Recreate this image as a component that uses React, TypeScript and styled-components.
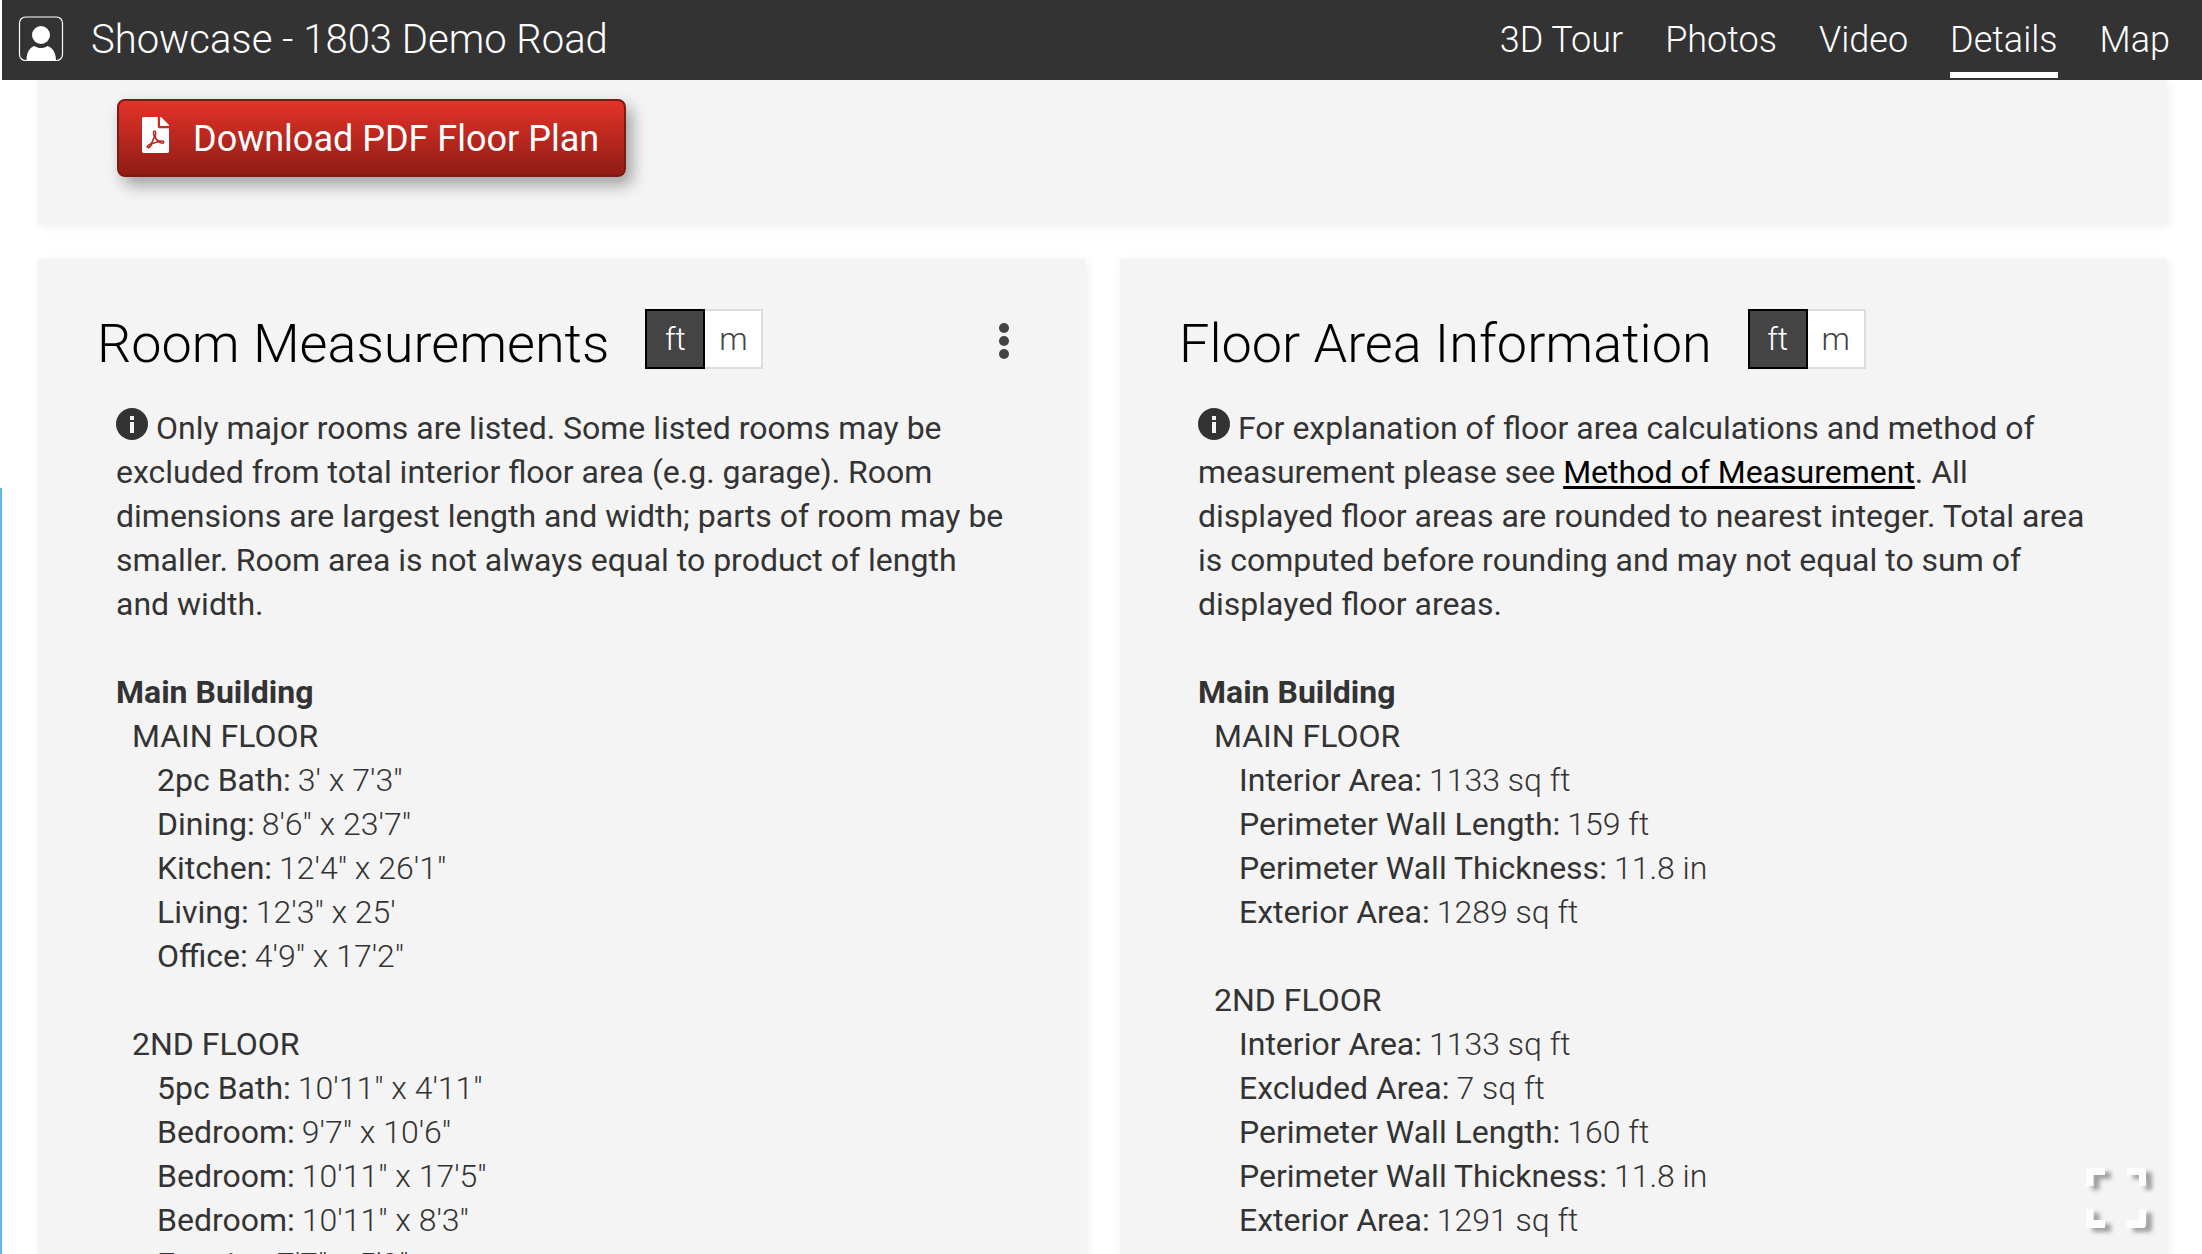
import React, { useState } from "react";
import styled, { createGlobalStyle, css } from "styled-components";

const GlobalStyle = createGlobalStyle`
  *, *::before, *::after { box-sizing: border-box; }
  body { margin: 0; background: #fff; }
  button { font-family: inherit; cursor: pointer; }
`;

const Page = styled.div`
  height: 100vh;
  overflow: hidden;
  display: flex;
  flex-direction: column;
  background: #fff;
  color: #333;
  font-family: Roboto, "Liberation Sans", sans-serif;
  font-size: 32px;
  line-height: 44px;
`;

const EdgeMarker = styled.div`
  position: fixed;
  left: 0;
  top: 488px;
  bottom: 0;
  width: 2px;
  background: #5cb8ee;
`;

const Header = styled.header`
  flex: none;
  display: flex;
  align-items: flex-start;
  height: 80px;
  margin-left: 2px;
  padding: 0 32px 0 16px;
  background: #333;
  color: #fff;
  font-weight: 300;
`;

const ProfileButton = styled.button`
  display: flex;
  align-items: center;
  height: 78px;
  padding: 0;
  border: 0;
  background: none;
`;

const Title = styled.h1`
  margin: 0 auto 0 27px;
  font-size: 40px;
  line-height: 80px;
  font-weight: 300;
`;

const Nav = styled.nav`
  display: flex;
  gap: 42px;
`;

const NavLink = styled.a<{ $active?: boolean }>`
  height: 78px;
  border-bottom: 6px solid ${(p) => (p.$active ? "#fff" : "transparent")};
  color: #fff;
  font-size: 36px;
  line-height: 80px;
  text-decoration: none;
`;

const Content = styled.main`
  flex: 1;
  min-height: 0;
  overflow: hidden;
  display: flex;
  flex-direction: column;
  gap: 36px;
  padding: 0 35px 0 38px;
`;

const cardSurface = css`
  background: #f4f4f4;
  box-shadow: 2px 3px 10px rgba(0, 0, 0, 0.08);
`;

const DownloadCard = styled.section`
  ${cardSurface}
  flex: none;
  padding: 19px 79px 46px;
`;

const DownloadButton = styled.button`
  display: flex;
  align-items: flex-start;
  gap: 24px;
  height: 78px;
  padding: 16px 25px 0 23px;
  border: 2px solid #7f1a12;
  border-radius: 8px;
  background: linear-gradient(#e43329, #8f1c14);
  box-shadow: 6px 8px 16px rgba(0, 0, 0, 0.35);
  color: #fff;
  font-size: 36px;
  line-height: 44px;
  font-weight: 400;
`;

const Columns = styled.div`
  flex: none;
  display: grid;
  grid-template-columns: 1fr 1fr;
  gap: 35px;
`;

const Card = styled.section`
  ${cardSurface}
  padding: 50px 76px 60px 59px;
`;

const CardHeader = styled.div`
  display: flex;
  align-items: flex-start;
  margin-bottom: 27px;
`;

const CardTitle = styled.h2`
  margin: 0 36px 0 0;
  color: #000;
  font-size: 54px;
  line-height: 70px;
  font-weight: 300;
`;

const UnitToggle = styled.div`
  display: flex;
  height: 60px;
`;

const UnitButton = styled.button<{ $active: boolean }>`
  width: 60px;
  padding: 0;
  border: 2px solid ${(p) => (p.$active ? "#000" : "#ddd")};
  background: ${(p) => (p.$active ? "#444" : "#fff")};
  color: ${(p) => (p.$active ? "#fff" : "#444")};
  font-size: 32px;
  font-weight: 300;
  position: relative;
  z-index: ${(p) => (p.$active ? 1 : 0)};
  & + & { margin-left: -2px; }
`;

const MenuButton = styled.button`
  display: flex;
  align-items: center;
  height: 64px;
  margin-left: auto;
  padding: 0;
  border: 0;
  background: none;
`;

const CardBody = styled.div`
  padding: 0 3px 0 19px;
`;

const Note = styled.p`
  margin: 0 0 44px;
`;

const InfoIcon = styled.svg`
  margin-right: 8px;
  vertical-align: -1px;
`;

const MethodLink = styled.a`
  color: #000;
  text-underline-offset: 3px;
`;

const Building = styled.h3`
  margin: 0;
  font-size: 32px;
  font-weight: 700;
`;

const Floor = styled.section`
  margin-bottom: 44px;
  padding-left: 16px;
`;

const FloorName = styled.h4`
  margin: 0;
  font-size: 32px;
  font-weight: 400;
`;

const Facts = styled.dl`
  margin: 0;
  padding-left: 25px;
`;

const Fact = styled.div`
  display: flex;
  gap: 7px;
`;

const FactName = styled.dt`
  font-weight: 400;
`;

const FactValue = styled.dd`
  margin: 0;
  font-weight: 300;
`;

const FullscreenButton = styled.button`
  position: fixed;
  right: 56px;
  bottom: 26px;
  display: flex;
  padding: 0;
  border: 0;
  background: none;
  filter: drop-shadow(6px 4px 2px rgba(0, 0, 0, 0.35));
`;

type Level = { name: string; facts: [string, string][] };

const roomLevels: Level[] = [
  {
    name: "MAIN FLOOR",
    facts: [
      ["2pc Bath:", "3' x 7'3\""],
      ["Dining:", "8'6\" x 23'7\""],
      ["Kitchen:", "12'4\" x 26'1\""],
      ["Living:", "12'3\" x 25'"],
      ["Office:", "4'9\" x 17'2\""],
    ],
  },
  {
    name: "2ND FLOOR",
    facts: [
      ["5pc Bath:", "10'11\" x 4'11\""],
      ["Bedroom:", "9'7\" x 10'6\""],
      ["Bedroom:", "10'11\" x 17'5\""],
      ["Bedroom:", "10'11\" x 8'3\""],
      ["Ensuite:", "7'7\" x 5'9\""],
    ],
  },
];

const areaLevels: Level[] = [
  {
    name: "MAIN FLOOR",
    facts: [
      ["Interior Area:", "1133 sq ft"],
      ["Perimeter Wall Length:", "159 ft"],
      ["Perimeter Wall Thickness:", "11.8 in"],
      ["Exterior Area:", "1289 sq ft"],
    ],
  },
  {
    name: "2ND FLOOR",
    facts: [
      ["Interior Area:", "1133 sq ft"],
      ["Excluded Area:", "7 sq ft"],
      ["Perimeter Wall Length:", "160 ft"],
      ["Perimeter Wall Thickness:", "11.8 in"],
      ["Exterior Area:", "1291 sq ft"],
    ],
  },
];

const navItems = ["3D Tour", "Photos", "Video", "Details", "Map"];

function Units({ label }: { label: string }) {
  const [unit, setUnit] = useState("ft");
  return (
    <UnitToggle role="group" aria-label={label}>
      {["ft", "m"].map((u) => (
        <UnitButton key={u} $active={u === unit} aria-pressed={u === unit} onClick={() => setUnit(u)}>
          {u}
        </UnitButton>
      ))}
    </UnitToggle>
  );
}

function Info() {
  return (
    <InfoIcon width="32" height="32" viewBox="0 0 32 32" aria-hidden="true">
      <circle cx="16" cy="16" r="16" fill="#333" />
      <path d="M14 8h4v4h-4zM14 14h4v11h-4z" fill="#f4f4f4" />
    </InfoIcon>
  );
}

function Levels({ levels }: { levels: Level[] }) {
  return (
    <>
      <Building>Main Building</Building>
      {levels.map((level) => (
        <Floor key={level.name}>
          <FloorName>{level.name}</FloorName>
          <Facts>
            {level.facts.map(([name, value], i) => (
              <Fact key={i}>
                <FactName>{name}</FactName>
                <FactValue>{value}</FactValue>
              </Fact>
            ))}
          </Facts>
        </Floor>
      ))}
    </>
  );
}

export default function App() {
  return (
    <Page>
      <GlobalStyle />
      <EdgeMarker />
      <Header>
        <ProfileButton aria-label="Profile">
          <svg width="46" height="46" viewBox="0 0 46 46" fill="none">
            <rect x="1.5" y="1" width="43" height="43.500" rx="6" stroke="#fff" strokeWidth="1.2" />
            <circle cx="23" cy="19" r="9" fill="#fff" />
            <path d="M8.500 44.500c0-7 2.500-13 8-14.500 4 2.700 9 2.700 13 0 5.500 1.500 8.500 7.500 8.500 14.500z" fill="#fff" />
          </svg>
        </ProfileButton>
        <Title>Showcase - 1803 Demo Road</Title>
        <Nav>
          {navItems.map((item) => (
            <NavLink key={item} href="#" $active={item === "Details"}>
              {item}
            </NavLink>
          ))}
        </Nav>
      </Header>
      <Content>
        <DownloadCard>
          <DownloadButton>
            <svg width="27" height="36" viewBox="0 0 384 512" fill="#fff" aria-hidden="true">
              <path d="M181.900 256.100c-5-16-4.900-46.900-2-46.900 8.400 0 7.600 36.900 2 46.900zm-1.700 47.200c-7.700 20.200-17.300 43.300-28.400 62.700 18.300-7 39-17.200 62.900-21.900-12.700-9.600-24.900-23.400-34.500-40.800zM86.100 428.100c0 .8 13.200-5.400 34.900-40.200-6.700 6.300-29.100 24.500-34.900 40.200zM248 160h136v328c0 13.300-10.700 24-24 24H24c-13.300 0-24-10.700-24-24V24C0 10.700 10.700 0 24 0h200v136c0 13.200 10.800 24 24 24zm-8 171.800c-20-12.200-33.300-29-42.700-53.800 4.500-18.500 11.600-46.600 6.200-64.200-4.700-29.400-42.400-26.500-47.800-6.800-5 18.300-.4 44.100 8.100 77-11.600 27.600-28.700 64.600-40.800 85.800-.1 0-.1.100-.2.100-27.100 13.900-73.600 44.500-54.500 68 5.600 6.900 16 10 21.500 10 17.900 0 35.700-18 61.100-61.800 25.800-8.500 54.100-19.100 79-23.200 21.700 11.800 47.100 19.500 64 19.500 29.200 0 31.200-32 19.700-43.400-13.900-13.600-54.300-9.700-73.600-7.200zM377 105L279 7c-4.500-4.500-10.600-7-17-7h-6v128h128v-6.100c0-6.300-2.500-12.400-7-16.900zm-74.100 255.300c4.100-2.700-2.500-11.900-42.800-9 37.100 15.800 42.800 9 42.800 9z" />
            </svg>
            Download PDF Floor Plan
          </DownloadButton>
        </DownloadCard>
        <Columns>
          <Card>
            <CardHeader>
              <CardTitle>Room Measurements</CardTitle>
              <Units label="Room measurement units" />
              <MenuButton aria-label="More options">
                <svg width="10" height="36" viewBox="0 0 10 36" fill="#444">
                  <circle cx="5" cy="5" r="5" />
                  <circle cx="5" cy="18" r="5" />
                  <circle cx="5" cy="31" r="5" />
                </svg>
              </MenuButton>
            </CardHeader>
            <CardBody>
              <Note>
                <Info />
                Only major rooms are listed. Some listed rooms may be excluded from total interior floor area (e.g.
                garage). Room dimensions are largest length and width; parts of room may be smaller. Room area is not
                always equal to product of length and width.
              </Note>
              <Levels levels={roomLevels} />
            </CardBody>
          </Card>
          <Card>
            <CardHeader>
              <CardTitle>Floor Area Information</CardTitle>
              <Units label="Floor area units" />
            </CardHeader>
            <CardBody>
              <Note>
                <Info />
                For explanation of floor area calculations and method of measurement please see{" "}
                <MethodLink href="#">Method of Measurement</MethodLink>. All displayed floor areas are rounded to
                nearest integer. Total area is computed before rounding and may not equal to sum of displayed floor
                areas.
              </Note>
              <Levels levels={areaLevels} />
            </CardBody>
          </Card>
        </Columns>
      </Content>
      <FullscreenButton aria-label="Full screen">
        <svg width="60" height="60" viewBox="0 0 60 60" fill="#fdfdfd">
          <path d="M3 0H19V7H7.500V18H0V3Q0 0 3 0ZM41 0H57Q60 0 60 3V18H53V7H41ZM0 41H7.500V52H19V60H3Q0 60 0 57ZM53 41H60V57Q60 60 57 60H41V52H53Z" />
        </svg>
      </FullscreenButton>
    </Page>
  );
}
